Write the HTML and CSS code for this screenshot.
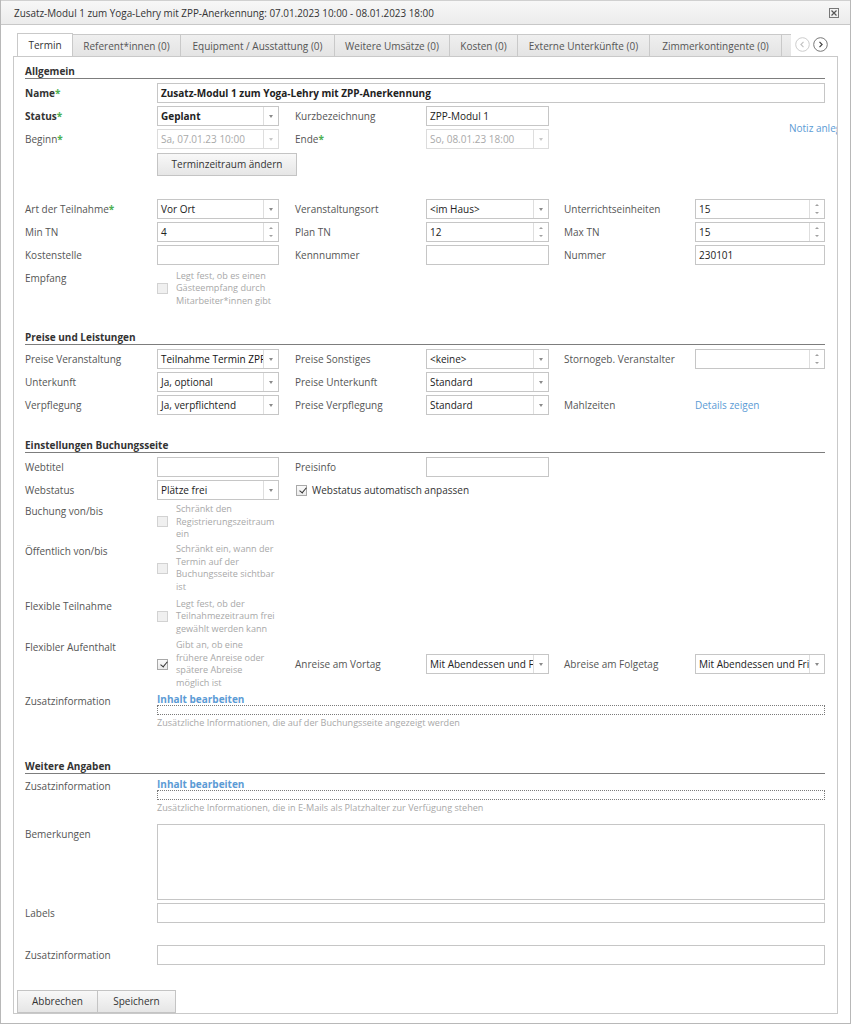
FILE: index.html
```html
<!DOCTYPE html>
<html lang="de">
<head>
<meta charset="utf-8">
<title>Termin</title>
<link rel="stylesheet" href="styles.css">
</head>
<body>
<div class="dialog">
  <div class="titlebar">
    <span class="title">Zusatz-Modul 1 zum Yoga-Lehry mit ZPP-Anerkennung: 07.01.2023 10:00 - 08.01.2023 18:00</span>
    <svg class="close" width="10" height="10" viewBox="0 0 10 10"><rect x="0.5" y="0.5" width="9" height="9" fill="none" stroke="#777"/><path d="M2.5 2.5 L7.5 7.5 M7.5 2.5 L2.5 7.5" stroke="#555" stroke-width="1.2"/></svg>
  </div>

  <div class="tabbar">
    <div class="tabs">
      <div class="tab active t1">Termin</div>
      <div class="tab t2">Referent*innen (0)</div>
      <div class="tab t3">Equipment / Ausstattung (0)</div>
      <div class="tab t4">Weitere Umsätze (0)</div>
      <div class="tab t5">Kosten (0)</div>
      <div class="tab t6">Externe Unterkünfte (0)</div>
      <div class="tab t7">Zimmerkontingente (0)</div>
      <div class="tab t8">Dokumente (0)</div>
    </div>
    <div class="navs">
      <svg class="nav" width="15" height="15" viewBox="0 0 15 15"><circle cx="7.5" cy="7.5" r="6.8" fill="#fff" stroke="#ccc"/><path d="M8.5 4.8 L5.9 7.5 L8.5 10.2" fill="none" stroke="#c4c4c4" stroke-width="1.2"/></svg>
      <svg class="nav" width="15" height="15" viewBox="0 0 15 15"><circle cx="7.5" cy="7.5" r="6.8" fill="#fff" stroke="#777"/><path d="M6.5 4.8 L9.1 7.5 L6.5 10.2" fill="none" stroke="#444" stroke-width="1.2"/></svg>
    </div>
  </div>

  <div class="panel">
    <a class="note link">Notiz anlegen</a>
    <div class="content">

      <div class="sec first">Allgemein</div>
      <div class="row r-first">
        <div class="lb b c1">Name<em class="req">*</em></div>
        <div class="f wide"><span class="v b">Zusatz-Modul 1 zum Yoga-Lehry mit ZPP-Anerkennung</span></div>
      </div>
      <div class="row">
        <div class="lb b c1">Status<em class="req">*</em></div>
        <div class="f c2"><span class="v b">Geplant</span><span class="dd"></span></div>
        <div class="lb c4">Kurzbezeichnung</div>
        <div class="f c5"><span class="v">ZPP-Modul 1</span></div>
      </div>
      <div class="row">
        <div class="lb c1">Beginn<em class="req">*</em></div>
        <div class="f dis c2"><span class="v">Sa, 07.01.23 10:00</span><span class="dd"></span></div>
        <div class="lb c4">Ende<em class="req">*</em></div>
        <div class="f dis c5"><span class="v">So, 08.01.23 18:00</span><span class="dd"></span></div>
      </div>
      <div class="row r-btn">
        <div class="c2 btnwrap"><span class="btn wbtn">Terminzeitraum ändern</span></div>
      </div>

      <div class="row r-gap">
        <div class="lb c1">Art der Teilnahme<em class="req">*</em></div>
        <div class="f c2"><span class="v">Vor Ort</span><span class="dd"></span></div>
        <div class="lb c4">Veranstaltungsort</div>
        <div class="f c5"><span class="v">&lt;im Haus&gt;</span><span class="dd"></span></div>
        <div class="lb c7">Unterrichtseinheiten</div>
        <div class="f c8"><span class="v">15</span><span class="sp"></span></div>
      </div>
      <div class="row">
        <div class="lb c1">Min TN</div>
        <div class="f c2"><span class="v">4</span><span class="sp"></span></div>
        <div class="lb c4">Plan TN</div>
        <div class="f c5"><span class="v">12</span><span class="sp"></span></div>
        <div class="lb c7">Max TN</div>
        <div class="f c8"><span class="v">15</span><span class="sp"></span></div>
      </div>
      <div class="row">
        <div class="lb c1">Kostenstelle</div>
        <div class="f c2"><span class="v"></span></div>
        <div class="lb c4">Kennnummer</div>
        <div class="f c5"><span class="v"></span></div>
        <div class="lb c7">Nummer</div>
        <div class="f c8"><span class="v">230101</span></div>
      </div>
      <div class="row r-help r-empfang">
        <div class="lb c1 hl">Empfang</div>
        <div class="help c2"><span class="cb dis"></span><span class="ht">Legt fest, ob es einen<br>Gästeempfang durch<br>Mitarbeiter*innen gibt</span></div>
      </div>

      <div class="sec">Preise und Leistungen</div>
      <div class="row r-first">
        <div class="lb c1">Preise Veranstaltung</div>
        <div class="f c2"><span class="v sb">Teilnahme Termin ZPF</span><span class="dd"></span></div>
        <div class="lb c4">Preise Sonstiges</div>
        <div class="f c5"><span class="v">&lt;keine&gt;</span><span class="dd"></span></div>
        <div class="lb c7">Stornogeb. Veranstalter</div>
        <div class="f c8"><span class="v"></span><span class="sp"></span></div>
      </div>
      <div class="row">
        <div class="lb c1">Unterkunft</div>
        <div class="f c2"><span class="v">Ja, optional</span><span class="dd"></span></div>
        <div class="lb c4">Preise Unterkunft</div>
        <div class="f c5"><span class="v">Standard</span><span class="dd"></span></div>
      </div>
      <div class="row">
        <div class="lb c1">Verpflegung</div>
        <div class="f c2"><span class="v">Ja, verpflichtend</span><span class="dd"></span></div>
        <div class="lb c4">Preise Verpflegung</div>
        <div class="f c5"><span class="v">Standard</span><span class="dd"></span></div>
        <div class="lb c7">Mahlzeiten</div>
        <div class="lb c8 link">Details zeigen</div>
      </div>

      <div class="sec">Einstellungen Buchungsseite</div>
      <div class="row r-first">
        <div class="lb c1">Webtitel</div>
        <div class="f c2"><span class="v"></span></div>
        <div class="lb c4">Preisinfo</div>
        <div class="f c5"><span class="v"></span></div>
      </div>
      <div class="row">
        <div class="lb c1">Webstatus</div>
        <div class="f c2"><span class="v">Plätze frei</span><span class="dd"></span></div>
        <div class="chk c4-6"><span class="cb on"></span><span class="ct">Webstatus automatisch anpassen</span></div>
      </div>
      <div class="row r-help">
        <div class="lb c1 hl">Buchung von/bis</div>
        <div class="help c2"><span class="cb dis"></span><span class="ht">Schränkt den<br>Registrierungszeitraum<br>ein</span></div>
      </div>
      <div class="row r-help">
        <div class="lb c1 hl">Öffentlich von/bis</div>
        <div class="help c2"><span class="cb dis"></span><span class="ht">Schränkt ein, wann der<br>Termin auf der<br>Buchungsseite sichtbar<br>ist</span></div>
      </div>
      <div class="row r-help r-flex1">
        <div class="lb c1 hl">Flexible Teilnahme</div>
        <div class="help c2"><span class="cb dis"></span><span class="ht">Legt fest, ob der<br>Teilnahmezeitraum frei<br>gewählt werden kann</span></div>
      </div>
      <div class="row r-help r-center">
        <div class="lb c1 hl">Flexibler Aufenthalt</div>
        <div class="help c2"><span class="cb on"></span><span class="ht">Gibt an, ob eine<br>frühere Anreise oder<br>spätere Abreise<br>möglich ist</span></div>
        <div class="lb c4 mid">Anreise am Vortag</div>
        <div class="f c5 mid"><span class="v">Mit Abendessen und F</span><span class="dd"></span></div>
        <div class="lb c7 mid">Abreise am Folgetag</div>
        <div class="f c8 mid"><span class="v">Mit Abendessen und Fri</span><span class="dd"></span></div>
      </div>
      <div class="row r-zusatz">
        <div class="lb c1 hl">Zusatzinformation</div>
        <div class="wide rich">
          <div class="link b edit">Inhalt bearbeiten</div>
          <div class="dotted"></div>
          <div class="hint">Zusätzliche Informationen, die auf der Buchungsseite angezeigt werden</div>
        </div>
      </div>

      <div class="sec s4">Weitere Angaben</div>
      <div class="row r-first r-zusatz2">
        <div class="lb c1 hl">Zusatzinformation</div>
        <div class="wide rich">
          <div class="link b edit">Inhalt bearbeiten</div>
          <div class="dotted"></div>
          <div class="hint">Zusätzliche Informationen, die in E-Mails als Platzhalter zur Verfügung stehen</div>
        </div>
      </div>
      <div class="row r-bem">
        <div class="lb c1">Bemerkungen</div>
        <div class="f wide ta"></div>
      </div>
      <div class="row">
        <div class="lb c1">Labels</div>
        <div class="f wide"><span class="v"></span></div>
      </div>
      <div class="row r-last">
        <div class="lb c1">Zusatzinformation</div>
        <div class="f wide"><span class="v"></span></div>
      </div>
    </div>
    <div class="footer">
      <span class="btn fbtn1">Abbrechen</span><span class="btn fbtn2">Speichern</span>
    </div>
  </div>
</div>
</body>
</html>
```

FILE: styles.css
```css
* { box-sizing: border-box; }
html, body { margin: 0; padding: 0; }
body {
  background: #ffffff;
  font-family: "Open Sans", "Noto Sans", sans-serif;
  font-size: 10px;
  color: #333;
}
.dialog {
  width: 851px;
  height: 1024px;
  border: 1px solid #b8b8b8;
  border-top: 0;
  background: #fff;
  overflow: hidden;
}
.titlebar {
  height: 25px;
  display: flex;
  align-items: center;
  justify-content: space-between;
  padding: 1px 11px 0 13px;
  background: linear-gradient(#f7f7f7, #ececec);
  border-top: 1px solid #d0d0d0;
  border-bottom: 1px solid #c8c8c8;
}
.title { color: #333; font-size: 9.9px; }
.close { display: block; }

.tabbar {
  display: flex;
  align-items: flex-end;
  margin: 8px 12px 0 12px;
  height: 24px;
}
.tabs {
  display: flex;
  width: 778px;
  padding-left: 4px;
  overflow: hidden;
  height: 24px;
  align-items: flex-end;
}
.tab {
  flex: none;
  height: 23px;
  line-height: 22px;
  padding: 0;
  text-align: center;
  border: 1px solid #c9c9c9;
  border-left: 0;
  border-bottom: 1px solid #c9c9c9;
  background: linear-gradient(#efefef, #e4e4e4);
  color: #555;
  white-space: nowrap;
  overflow: hidden;
}
.tab:first-child { border-left: 1px solid #c9c9c9; }
.tab.active {
  background: #fff;
  color: #333;
  border-bottom-color: #fff;
  height: 24px;
  line-height: 22px;
}
.t1 { width: 56px; }
.t2 { width: 108px; }
.t3 { width: 154px; }
.t4 { width: 115px; }
.t5 { width: 68px; }
.t6 { width: 132px; }
.t7 { width: 132px; }
.t8 { width: 100px; }

.navs {
  flex: 1;
  height: 24px;
  display: flex;
  align-items: center;
  gap: 3px;
  padding-left: 4px;
  border-bottom: 1px solid #c9c9c9;
}
.nav { display: block; }

.panel {
  position: relative;
  margin: -1px 12px 0 12px;
  border: 1px solid #c9c9c9;
  height: 958px;
  overflow: hidden;
}
.content {
  padding: 7px 12px 0 11px;
}
.note {
  position: absolute;
  left: 775px;
  top: 64px;
  white-space: nowrap;
}
.link, .lb.link { color: #5b9bd5; }
.b { font-weight: bold; }

.sec {
  font-weight: bold;
  color: #333;
  line-height: 14px;
  border-bottom: 1px solid #7d7d7d;
  margin-top: 23px;
}
.sec.first { margin-top: 0; }
.sec.s4 { margin-top: 30px; }

.row {
  display: grid;
  grid-template-columns: 132px 122px 16px 131px 123px 15px 131px 130px;
  align-items: start;
  margin-top: 3px;
}
.row.r-first { margin-top: 4px; }
.row.r-btn { margin-top: 4px; }
.row.r-gap { margin-top: 23px; }
.row.r-empfang { margin-top: 5px; }
.row.r-flex1 { margin-top: 5px; }
.row.r-center { margin-top: 4px; }
.row.r-center .mid { align-self: center; }
.row.r-zusatz { margin-top: 4px; }
.row.r-bem { margin-top: 9px; }
.row.r-last { margin-top: 22px; }

.c1 { grid-column: 1; }
.c2 { grid-column: 2; }
.c4 { grid-column: 4; }
.c5 { grid-column: 5; }
.c7 { grid-column: 7; }
.c8 { grid-column: 8; }
.c4-6 { grid-column: 4 / 7; }
.wide { grid-column: 2 / 9; }

.lb {
  line-height: 20px;
  color: #555;
  white-space: nowrap;
}
.lb.b { color: #333; }
.lb.hl { line-height: 16px; }
.req { font-style: normal; color: #4caf50; font-weight: bold; }

.f {
  display: flex;
  height: 20px;
  border: 1px solid #c6c6c6;
  background: #fff;
}
.f .v {
  flex: 1;
  min-width: 0;
  overflow: hidden;
  white-space: nowrap;
  line-height: 18px;
  padding: 0 3px;
  color: #222;
}
.f .v.sb { color: #111; }
.f.dis { border-color: #dcdcdc; }
.f.dis .v { color: #a9a9a9; }
.dd, .sp {
  position: relative;
  flex: none;
  width: 15px;
  border-left: 1px solid #dedede;
}
.dd::after {
  content: "";
  position: absolute;
  left: 4.5px;
  top: 8px;
  border-left: 2.5px solid transparent;
  border-right: 2.5px solid transparent;
  border-top: 3px solid #8a8a8a;
}
.f.dis .dd::after { border-top-color: #c8c8c8; }
.sp::before, .sp::after {
  content: "";
  position: absolute;
  left: 5px;
  border-left: 2px solid transparent;
  border-right: 2px solid transparent;
}
.sp::before { top: 4px; border-bottom: 2px solid #a0a0a0; }
.sp::after { top: 12px; border-top: 2px solid #a0a0a0; }
.ta { height: 76px; }

.btn {
  display: inline-block;
  height: 23px;
  line-height: 21px;
  text-align: center;
  border: 1px solid #c4c4c4;
  background: linear-gradient(#f8f8f8, #e6e6e6);
  color: #333;
  white-space: nowrap;
}
.wbtn { width: 140px; }
.btnwrap { grid-column: 2 / 4; }

.help {
  display: flex;
  align-items: center;
  gap: 8px;
}
.ht {
  color: #a8a8a8;
  font-size: 9.1px;
  line-height: 12.4px;
  white-space: nowrap;
}
.cb {
  flex: none;
  width: 11px;
  height: 11px;
  border: 1px solid #c9c9c9;
  background: linear-gradient(#fafafa, #ececec);
  position: relative;
  display: inline-block;
}
.cb.dis { background: #f0f0f0; border-color: #d2d2d2; }
.cb.on { border-color: #a9a9a9; }
.cb.on::after {
  content: "";
  position: absolute;
  left: 3.5px;
  top: 0.5px;
  width: 3px;
  height: 6px;
  border-right: 1.6px solid #333;
  border-bottom: 1.6px solid #333;
  transform: rotate(40deg);
}
.chk {
  display: flex;
  align-items: center;
  gap: 5px;
  height: 20px;
  padding-left: 1px;
}
.ct { color: #333; }

.rich { display: flex; flex-direction: column; }
.edit { line-height: 12px; }
.dotted {
  height: 10px;
  border: 1px dotted #7a7a7a;
}
.hint {
  color: #a8a8a8;
  font-size: 9.1px;
  line-height: 12.4px;
  margin-top: 2px;
  white-space: nowrap;
}

.footer {
  display: flex;
  padding: 0 0 0 3px;
  margin-top: 25px;
}
.fbtn1 { width: 81px; }
.fbtn2 { width: 79px; margin-left: -1px; }
```
